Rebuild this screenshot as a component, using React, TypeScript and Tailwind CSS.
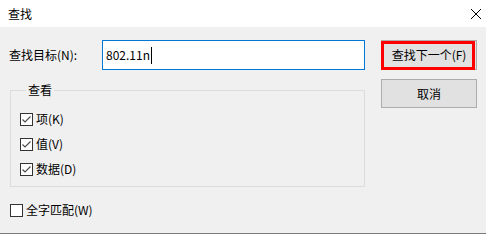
import React from "react";

const Check = ({ checked }: { checked: boolean }) => (
  <span className="flex h-[13px] w-[13px] shrink-0 items-center justify-center border border-[#333333] bg-white">
    {checked && (
      <svg width="11" height="11" viewBox="0 0 11 11">
        <path d="M1.5 5.5 L4 8 L9.5 2.5" fill="none" stroke="#4d4d4d" strokeWidth="1.2" />
      </svg>
    )}
  </span>
);

export default function App() {
  return (
    <div
      className="flex h-[234px] w-[486px] flex-col overflow-hidden border-b border-[#7a7a7a] bg-[#f0f0f0] text-[12px] leading-[16px] text-black"
      style={{ fontFamily: '"Noto Sans CJK SC", "Noto Sans", sans-serif' }}
    >
      <div className="flex h-[27px] shrink-0 items-center justify-between bg-white pl-[8px]">
        <span className="text-[12px]">查找</span>
        <svg width="20" height="20" viewBox="0 0 20 20">
          <path d="M5 5 L15 15 M15 5 L5 15" stroke="#000" strokeWidth="1" />
        </svg>
      </div>
      <div className="flex pl-[9px] pt-[13px]">
        <div className="flex w-[356px] flex-col">
          <div className="flex items-center">
            <span className="w-[93px]">查找目标(N):</span>
            <div className="flex h-[30px] w-[263px] items-center border border-[#0078d7] bg-white pl-[3px]">
              <span>802.11n</span>
              <span className="ml-[1px] h-[17px] w-[1px] bg-black" />
            </div>
          </div>
          <fieldset className="ml-[1px] mt-[12px] h-[105px] w-[355px] border border-[#dcdcdc] pl-[9px] pt-[13px]">
            <legend className="ml-[6px] px-[2px]">查看</legend>
            <div className="flex flex-col gap-[9px]">
              <label className="flex items-center gap-[3px]">
                <Check checked />
                <span>项(K)</span>
              </label>
              <label className="flex items-center gap-[3px]">
                <Check checked />
                <span>值(V)</span>
              </label>
              <label className="flex items-center gap-[3px]">
                <Check checked />
                <span>数据(D)</span>
              </label>
            </div>
          </fieldset>
          <label className="ml-[1px] mt-[15px] flex items-center gap-[3px]">
            <Check checked={false} />
            <span>全字匹配(W)</span>
          </label>
        </div>
        <div className="ml-[16px] flex flex-col gap-[9px]">
          <div className="relative flex h-[30px] w-[96px] items-center justify-center border border-[#adadad] bg-[#e1e1e1]">
            <span>查找下一个(F)</span>
            <span className="absolute left-[-1px] top-0 h-[29px] w-[94px] border-[3px] border-[#ff0000]" />
          </div>
          <div className="flex h-[29px] w-[96px] items-center justify-center border border-[#adadad] bg-[#e1e1e1]">
            <span>取消</span>
          </div>
        </div>
      </div>
    </div>
  );
}
